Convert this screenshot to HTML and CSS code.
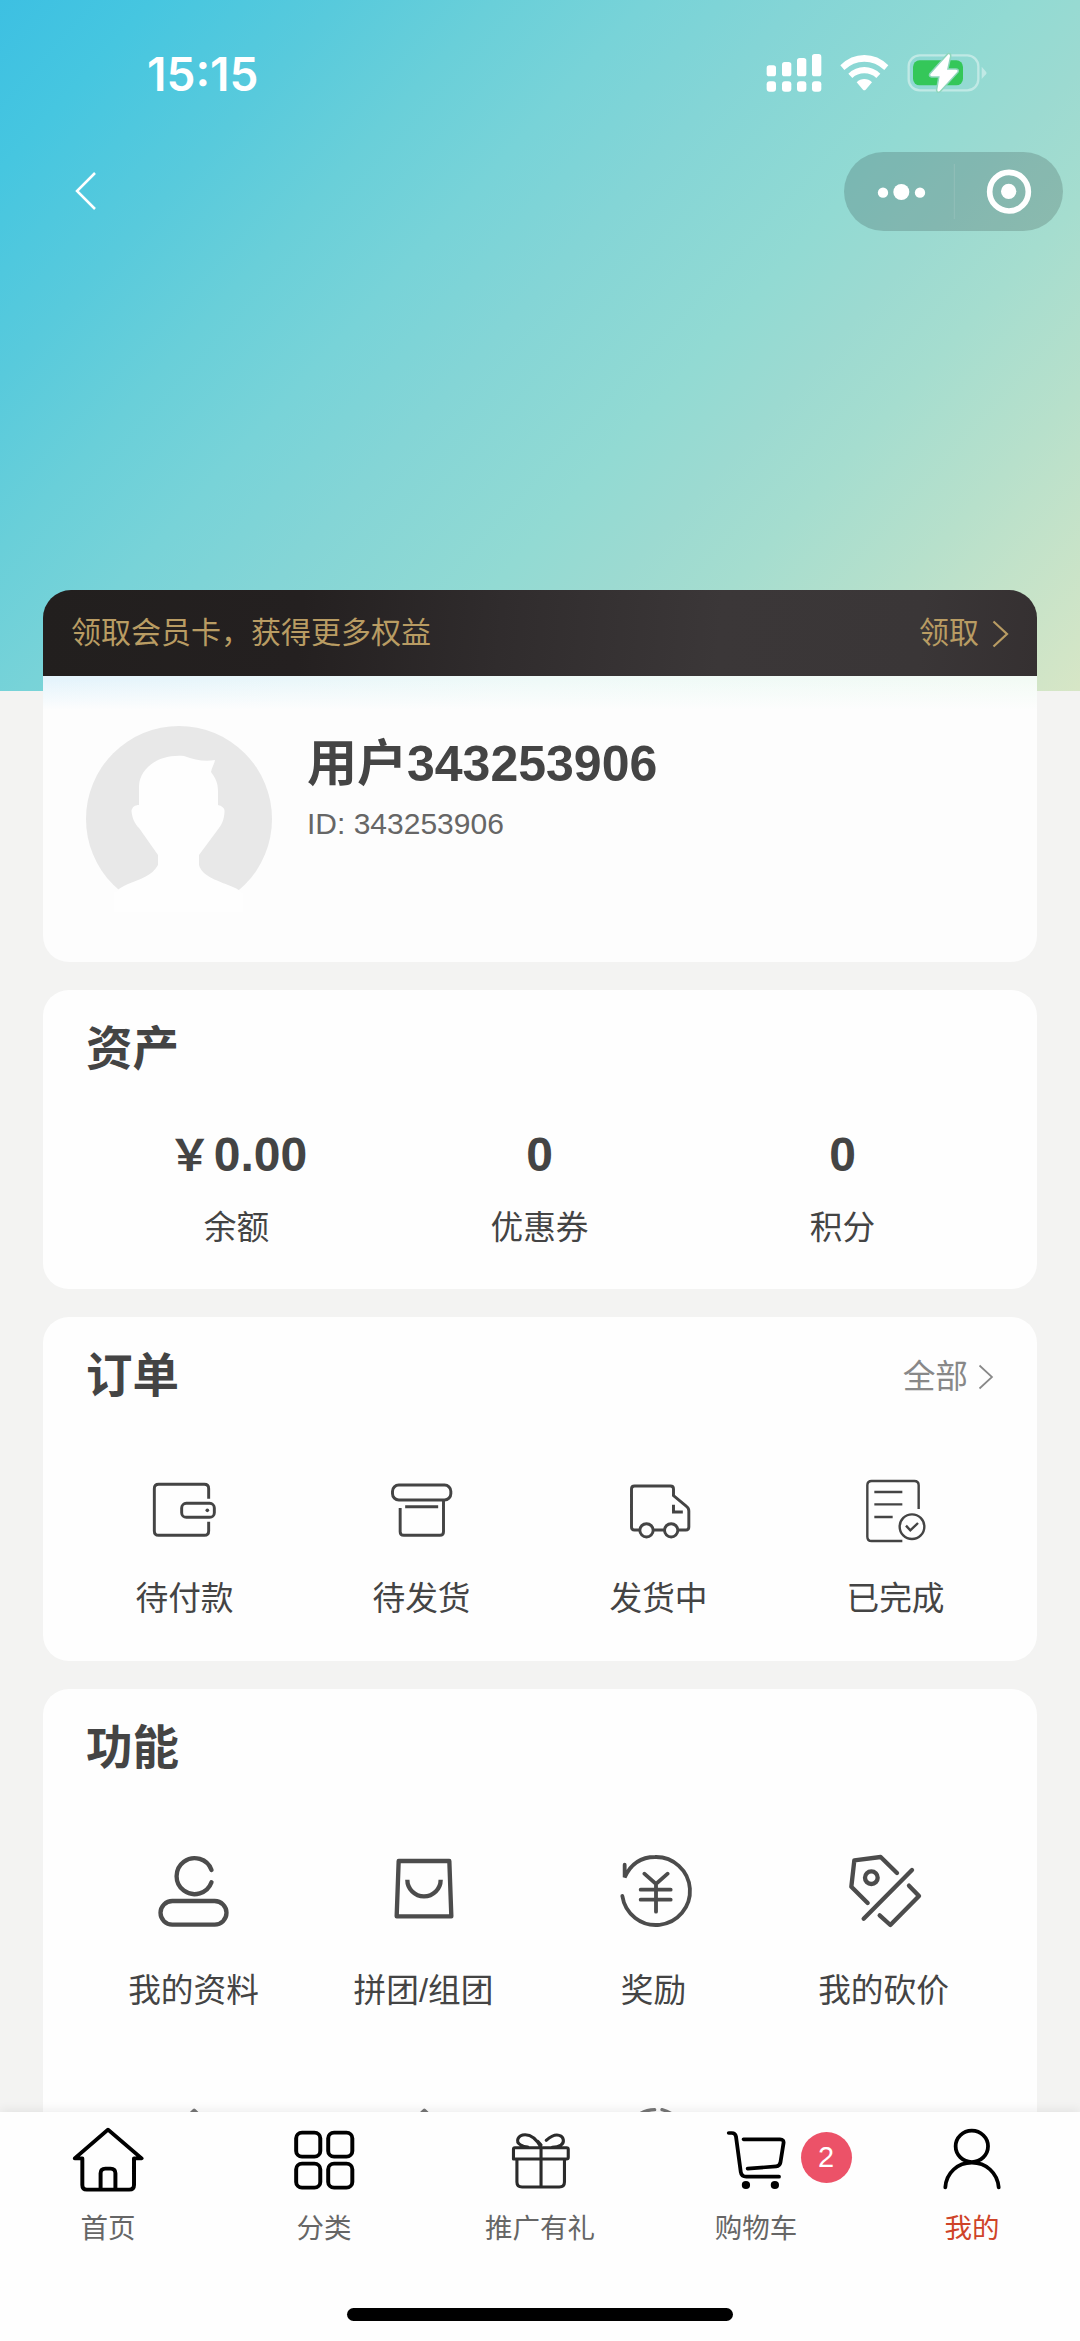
FILE: index.html
```html
<!DOCTYPE html>
<html lang="zh-CN">
<head>
<meta charset="UTF-8">
<title>我的</title>
<link rel="stylesheet" href="styles.css">
</head>
<body>
<div class="page">
  <main class="scroll">
    <div class="status">
      <span class="time">15:15</span>
      <div class="status-icons">
        <svg class="signal" viewBox="138 62 170 132" fill="#fff">
          <rect x="140" y="105" width="28" height="33" rx="8"/><rect x="186" y="95" width="28" height="43" rx="8"/><rect x="231" y="83" width="28" height="55" rx="8"/><rect x="276" y="71" width="28" height="67" rx="8"/>
          <rect x="140" y="153" width="28" height="31" rx="9"/><rect x="186" y="153" width="28" height="31" rx="9"/><rect x="231" y="153" width="28" height="31" rx="9"/><rect x="276" y="153" width="28" height="31" rx="9"/>
        </svg>
        <svg class="wifi" viewBox="360 62 146 132" fill="#fff">
          <path d="M361 105Q392 74 433 74T505 105L493 119Q467 94 433 94T373 119Z"/>
          <path d="M385 130Q406 110 433 110T481 130L469 143Q454 129 433 129T397 143Z"/>
          <path d="M410 156Q420 146 433 146T456 156L437 178Q433 182 429 178Z"/>
        </svg>
        <svg class="battery" viewBox="560 62 240 132">
          <rect x="565" y="75" width="209" height="105" rx="33" fill="none" stroke="#c0e9e5" stroke-width="7"/>
          <path d="M784 109L797 124Q800 128 797 132L784 146Z" fill="#c0e9e5"/>
          <rect x="578" y="90" width="150" height="75" rx="20" fill="#34c759"/>
          <path d="M684 72L630 132Q628 137 634 138H658L651 179Q652 187 659 181L711 124Q714 118 706 118H680L689 77Q689 70 684 72Z" fill="#fff" stroke="#8fd6bd" stroke-width="9" paint-order="stroke"/>
        </svg>
      </div>
    </div>
    <div class="navbar">
      <svg class="back" viewBox="0 0 24 40" fill="none" stroke="#fff" stroke-width="2.5"><path d="M21 2L3 20L21 38"/></svg>
      <div class="capsule">
        <svg viewBox="373 364 655 237" fill="#fff">
          <circle cx="489" cy="486" r="15.500"/><circle cx="544" cy="484" r="24"/><circle cx="600" cy="486" r="15.500"/>
          <path d="M703 400V565" stroke="#92bfb8" stroke-width="3"/>
          <circle cx="867" cy="483" r="58" fill="none" stroke="#fff" stroke-width="17"/><circle cx="866" cy="482" r="23"/>
        </svg>
      </div>
    </div>

    <div class="content">
      <section class="profile">
        <div class="member">
          <span>领取会员卡，获得更多权益</span>
          <span class="member-get">领取
            <svg class="chev-gold" viewBox="0 0 17 28" fill="none" stroke="#b99c63" stroke-width="2.200"><path d="M1.500 1.500L15 14L1.500 26.500"/></svg>
          </span>
        </div>
        <div class="user">
          <svg class="avatar" viewBox="86 726 186 186">
            <circle cx="179" cy="819" r="93" fill="#e8e8e8"/>
            <path fill="#fefefe" d="M139 805V786C140 768 158 754 184 756C195 760 205 762 215 760C214 765 212 767 211 772C216 779 218 783 218 792V805C222 806 225 808 224.500 812C224 820 222 824 219 828L199 855V865C202 876 216 880 228 885Q237 888 243 893V914H114V893Q119 888 128 884C140 879 152 876 158 865V855L139 828C135 824 132 818 131.500 811C132 807 135 805 139 805Z"/>
          </svg>
          <div class="user-text">
            <div class="user-name">用户343253906</div>
            <div class="user-id">ID: 343253906</div>
          </div>
        </div>
      </section>

      <section class="card assets">
        <h2>资产</h2>
        <div class="asset-grid">
          <div><b><span class="yen">￥</span>0.00</b><span class="label">余额</span></div>
          <div><b>0</b><span class="label">优惠券</span></div>
          <div><b>0</b><span class="label">积分</span></div>
        </div>
      </section>

      <section class="card orders">
        <div class="card-head">
          <h2>订单</h2>
          <span class="all">全部
            <svg class="chev-gray" viewBox="0 0 16 26" fill="none" stroke="#888" stroke-width="1.700"><path d="M1.500 1.500L14 13L1.500 24.500"/></svg>
          </span>
        </div>
        <div class="grid order-grid">
          <div class="item">
            <svg viewBox="267 462 216 216" class="ico">
              <path d="M446 536V506Q446 493 433 493H296Q283 493 283 506V633Q283 646 296 646H433Q446 646 446 633V605"/>
              <rect x="365" y="550" width="98" height="42" rx="14"/><circle cx="442" cy="571" r="5.500" fill="#444" stroke="none"/>
            </svg>
            <span>待付款</span>
          </div>
          <div class="item">
            <svg viewBox="976.500 462 216 216" class="ico">
              <rect x="996" y="495" width="175" height="45" rx="19"/><path d="M1019 564V635Q1019 646 1030 646H1138Q1149 646 1149 635V541M1034 560H1133"/>
            </svg>
            <span>待发货</span>
          </div>
          <div class="item">
            <svg viewBox="187.500 462 216 216" class="ico">
              <path d="M236 630H222Q213 630 213 621V507Q213 498 222 498H330Q339 498 339 507V527L378 559Q385 564 385 573V621Q385 630 376 630H354M280 630H311M339 554V576H367"/>
              <circle cx="258" cy="631" r="20"/><circle cx="332" cy="631" r="20"/>
            </svg>
            <span>发货中</span>
          </div>
          <div class="item">
            <svg viewBox="900 462 216 216" class="ico thin">
              <path d="M1076 567V496Q1076 483 1063 483H935Q922 483 922 496V650Q922 663 935 663H1027M943 516H1027M943 553H1027M943 591H998"/>
              <circle cx="1056" cy="620" r="37"/><path d="M1038 617L1051 631L1074 609"/>
            </svg>
            <span>已完成</span>
          </div>
        </div>
      </section>

      <section class="card functions">
        <h2>功能</h2>
        <div class="grid function-grid">
          <div class="item">
            <svg viewBox="280.500 486 240 240" class="ico bold"><path stroke-linecap="round" d="M453 540A54 54 0 1 0 453 577"/><rect x="300" y="633" width="198" height="71" rx="35.500"/></svg>
            <span>我的资料</span>
          </div>
          <div class="item">
            <svg viewBox="971 486 240 240" class="ico bold"><path stroke-linejoin="round" d="M1015 513H1167L1173 679H1009Z"/><path d="M1041 569A50 50 0 0 0 1141 569"/></svg>
            <span>拼团/组团</span>
          </div>
          <div class="item">
            <svg viewBox="162 486 240 240" class="ico bold mid" stroke-linecap="round"><path d="M194 524V562Q222 501 285 501A102 102 0 1 1 187 618M253 551L288 582L323 551M288 582V665M242 599H332M242 629H332"/></svg>
            <span>奖励</span>
          </div>
          <div class="item">
            <svg viewBox="852 486 240 240" class="ico bold" stroke-linecap="round" stroke-linejoin="round"><path d="M1011 549L962 501L883 511L874 590L923 639M1056 540L911 686M1047 587L1077 618L991 705L959 676"/><circle cx="934" cy="563" r="19"/></svg>
            <span>我的砍价</span>
          </div>
          <div class="item"><svg viewBox="280.500 1242 240 240" class="ico peek" stroke-linejoin="round"><path d="M401 1261L486 1340V1440H316V1340Z"/></svg></div>
          <div class="item"><svg viewBox="971 1242 240 240" class="ico peek" stroke-linejoin="round"><path d="M1092 1261L1177 1340V1440H1007V1340Z"/></svg></div>
          <div class="item"><svg viewBox="162 1242 240 240" class="ico peek" stroke-linecap="round"><path d="M284 1259C240 1260 206 1290 190 1340M306 1259C350 1270 378 1310 380 1350"/></svg></div>
        </div>
      </section>
    </div>
  </main>

  <nav class="tabbar">
    <div class="tab">
      <svg viewBox="209 102 209 216" preserveAspectRatio="none" class="tab-ico"><path stroke-width="11.500" stroke-linejoin="round" stroke-linecap="round" d="M239 205H217L313.500 119L411 205H389V285Q389 299 375 299H252Q239 299 239 285V206M292 297V250Q292 236 306 236H321Q335 236 335 250V297"/></svg>
      <span>首页</span>
    </div>
    <div class="tab">
      <svg viewBox="836.300 102 209 216" preserveAspectRatio="none" class="tab-ico"><g stroke-width="11.500"><rect x="860" y="128" width="70" height="72" rx="17"/><rect x="953" y="128" width="70" height="72" rx="17"/><rect x="860" y="221" width="70" height="72" rx="17"/><rect x="953" y="221" width="70" height="72" rx="17"/></g></svg>
      <span>分类</span>
    </div>
    <div class="tab">
      <svg viewBox="-104.500 102 209 216" preserveAspectRatio="none" class="tab-ico gift"><path stroke-width="9" stroke-linejoin="round" stroke-linecap="round" d="M-73 173H77Q82 173 82 178V202Q82 207 77 207H-77V178Q-77 173 -73 173ZM-67 208V276Q-67 291 -52 291H56Q71 291 71 276V208M3 173V290M3 172C-8 151 -25 134 -43 134C-64 134 -73 155 -56 165C-51 169 -44 171 -35 171M3 165L-6 154M18 151C31 139 45 132 56 136C70 140 72 158 60 166C53 171 45 172 35 172"/></svg>
      <span>推广有礼</span>
    </div>
    <div class="tab">
      <svg viewBox="522.700 102 209 216" preserveAspectRatio="none" class="tab-ico"><path stroke-width="11" stroke-linejoin="round" stroke-linecap="round" d="M548 129H557Q567 129 569 139L583 246Q585 260 599 260H694M591 148H697Q709 148 707 160L698 218Q696 228 686 229L603 236"/><circle cx="598" cy="285" r="12" fill="#000" stroke="none"/><circle cx="682" cy="285" r="12" fill="#000" stroke="none"/></svg>
      <i class="badge">2</i>
      <span>购物车</span>
    </div>
    <div class="tab active">
      <svg viewBox="1150 102 209 216" preserveAspectRatio="none" class="tab-ico"><path stroke-width="11" stroke-linecap="round" d="M1177 292C1180 248 1213 218 1254 218S1328 248 1332 292"/><circle cx="1254" cy="169" r="47" stroke-width="11"/></svg>
      <span>我的</span>
    </div>
    <div class="home-indicator"></div>
  </nav>
</div>
</body>
</html>
```
FILE: styles.css
```css
* { box-sizing: border-box; margin: 0; padding: 0; }

body {
  width: 1080px;
  font-family: "Liberation Sans", "Noto Sans CJK SC", sans-serif;
  color: #444;
}

svg { display: block; flex: none; }

.page {
  height: 2341px;
  display: flex;
  flex-direction: column;
  overflow: hidden;
  background: #f3f3f2;
}

.scroll {
  flex: 1;
  min-height: 0;
  overflow: hidden;
  background: linear-gradient(132deg, #3dc0e2 0%, #46c6e0 9%, #58cadc 20%, #69cfd9 29%, #78d3d8 38%, #84d5d6 47%, #92dad3 60%, #9cdad1 67%, #a5ddcf 74%, #b7e0cb 84%, #d7e6c6 100%) no-repeat 0 0 / 100% 691px;
}

/* Status bar */
.status {
  height: 148px;
  padding: 0 93px 0 147px;
  display: flex;
  align-items: center;
  justify-content: space-between;
}
.time {
  font: 600 46px/50px Inter, sans-serif;
  color: #fff;
}
.status-icons { display: flex; margin-top: -3px; }
.status-icons svg { height: 44px; }
.signal { width: 56.67px; }
.wifi { width: 48.67px; margin-left: 17.3px; }
.battery { width: 80px; margin-left: 18px; }

.navbar {
  height: 86px;
  padding: 0 17px 0 74px;
  display: flex;
  align-items: center;
  justify-content: space-between;
}
.back { width: 24px; height: 40px; }
.capsule {
  width: 219px;
  height: 79px;
  border-radius: 40px;
  background: rgba(0, 0, 0, .155);
}
.capsule svg { width: 100%; height: 100%; }

.content { margin-top: 356px; padding: 0 43px; }

/* Profile */
.member {
  height: 86px;
  padding: 0 28px;
  display: flex;
  align-items: center;
  justify-content: space-between;
  border-radius: 28px 28px 0 0;
  background: linear-gradient(95deg, #221f1e 0%, #242020 26%, #302c2d 46%, #3b3738 68%, #3a3637 88%, #353031 100%);
  color: #b99c63;
  font-size: 30px;
  line-height: 40px;
}
.member-get { display: flex; align-items: center; gap: 13px; }
.chev-gold { width: 17px; height: 28px; margin-top: 2px; }

.user {
  height: 286px;
  padding: 50px 43px 0;
  display: flex;
  gap: 35px;
  border-radius: 0 0 26px 26px;
  background:
    linear-gradient(to bottom, rgba(253, 253, 253, 0) 4px, #fdfdfd 34px),
    linear-gradient(to right, #e5f4fc, #effaf8 50%, #f3fbf5);
}
.avatar { width: 186px; height: 186px; }
.user-text { padding-top: 8px; }
.user-name { font-size: 50px; line-height: 60px; font-weight: 700; }
.user-id { margin-top: 10px; font-size: 30px; line-height: 40px; color: #666; }

/* Cards */
.card {
  margin-top: 28px;
  padding-top: 29px;
  border-radius: 26px;
  background: #fefefe;
}
h2 {
  padding-left: 43px;
  font-size: 46.5px;
  line-height: 60px;
  font-weight: 700;
}
.card-head {
  display: flex;
  justify-content: space-between;
  align-items: center;
  padding-right: 43px;
}

.assets { height: 299px; }
.asset-grid {
  margin-top: 46px;
  padding: 0 43px 0 42px;
  display: grid;
  grid-template-columns: repeat(3, 1fr);
  text-align: center;
}
.asset-grid b { display: block; font-size: 48px; line-height: 60px; }
.yen { display: inline-block; width: 48px; font-size: 43px; line-height: 50px; font-weight: 700; }
.label { display: block; margin-top: 18px; font-size: 32.7px; line-height: 50px; }

.orders { height: 344px; margin-top: 27.5px; }
.all {
  display: flex;
  align-items: center;
  gap: 10px;
  font-size: 32.7px;
  line-height: 50px;
  color: #888;
  padding-top: 3px;
}
.chev-gray { width: 16px; height: 26px; }

.grid { display: grid; grid-template-columns: repeat(4, 1fr); }
.item {
  display: flex;
  flex-direction: column;
  align-items: center;
  font-size: 32.7px;
  line-height: 50px;
}
.ico { fill: none; stroke: #444; stroke-width: 8.8; }
.ico.thin { stroke-width: 7.2; }
.ico.bold { stroke: #4c4c4c; stroke-width: 13; }
.ico.mid { stroke-width: 11.5; }
.ico.peek { stroke: #777; stroke-width: 10; }

.order-grid { margin-top: 68px; padding: 0 23px; }
.order-grid .ico { width: 72px; height: 72px; margin-bottom: 28px; }

.functions { height: 600px; }
.function-grid { margin-top: 74px; padding: 0 38.5px 0 35.5px; row-gap: 88px; }
.function-grid .ico { width: 80px; height: 80px; margin-bottom: 34px; }

/* Tab bar */
.tabbar {
  position: relative;
  height: 229px;
  padding-top: 12px;
  display: grid;
  grid-template-columns: repeat(5, 1fr);
  grid-template-rows: 184px auto;
  background: #fefefe;
  box-shadow: 0 -2px 10px rgba(0, 0, 0, .07);
}
.tab {
  position: relative;
  display: flex;
  flex-direction: column;
  align-items: center;
  gap: 15px;
  font-size: 27.5px;
  line-height: 36px;
  color: #666;
}
.tab.active { color: #cf4428; }
.tab-ico { width: 72px; height: 72px; fill: none; stroke: #000; }
.tab-ico.gift { stroke: #2b2b2b; }
.badge {
  position: absolute;
  left: 152.5px;
  top: 8px;
  width: 51px;
  height: 51px;
  border-radius: 50%;
  background: #ec5268;
  color: #fff;
  font-style: normal;
  font-size: 29px;
  line-height: 51px;
  text-align: center;
}
.home-indicator {
  grid-column: 1 / -1;
  justify-self: center;
  width: 386px;
  height: 13px;
  border-radius: 7px;
  background: #000;
}
```
